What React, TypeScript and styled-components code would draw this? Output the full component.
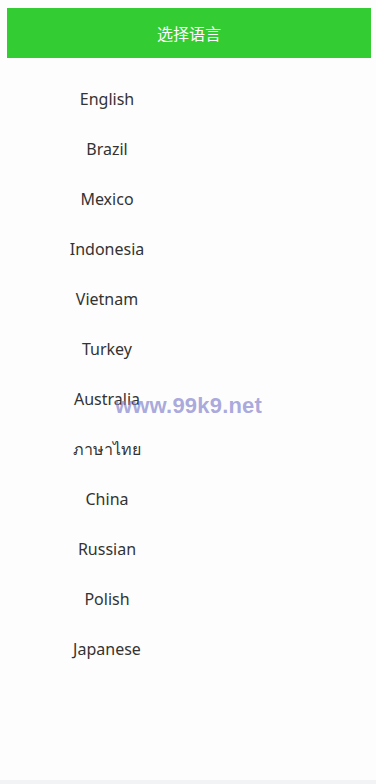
import React from 'react';
import styled, { createGlobalStyle } from 'styled-components';

const GlobalStyle = createGlobalStyle`
  html, body {
    margin: 0;
    padding: 0;
    background: #f2f3f5;
  }
  body {
    font-family: "Noto Sans", "Noto Sans CJK SC", sans-serif;
  }
`;

const Page = styled.div`
  position: relative;
  min-height: 780px;
  background: #fdfdfd;
  padding: 8px 5px 0 7px;
  box-sizing: border-box;
`;

const Header = styled.div`
  height: 50px;
  background: #33cc33;
  color: #ffffff;
  font-size: 16px;
  display: flex;
  align-items: center;
  justify-content: center;
  font-family: "Noto Sans CJK SC", sans-serif;
`;

const LangList = styled.ul`
  list-style: none;
  margin: 0;
  padding: 16px 0 0 0;
  width: 200px;
  display: flex;
  flex-direction: column;
`;

const LangItem = styled.li`
  height: 50px;
  display: flex;
  align-items: center;
  justify-content: center;
  font-size: 16px;
  color: #333333;
  cursor: pointer;
`;

const Watermark = styled.div`
  position: absolute;
  left: 115px;
  top: 393px;
  font-family: "Liberation Sans", Arial, sans-serif;
  font-weight: bold;
  font-size: 22px;
  color: rgba(128, 128, 204, 0.68);
  letter-spacing: 0.2px;
  pointer-events: none;
`;

const languages = [
  'English',
  'Brazil',
  'Mexico',
  'Indonesia',
  'Vietnam',
  'Turkey',
  'Australia',
  'ภาษาไทย',
  'China',
  'Russian',
  'Polish',
  'Japanese',
];

const App: React.FC = () => {
  return (
    <>
      <GlobalStyle />
      <Page>
        <Header>选择语言</Header>
        <LangList>
          {languages.map(lang => (
            <LangItem key={lang}>{lang}</LangItem>
          ))}
        </LangList>
        <Watermark>www.99k9.net</Watermark>
      </Page>
    </>
  );
};

export default App;
